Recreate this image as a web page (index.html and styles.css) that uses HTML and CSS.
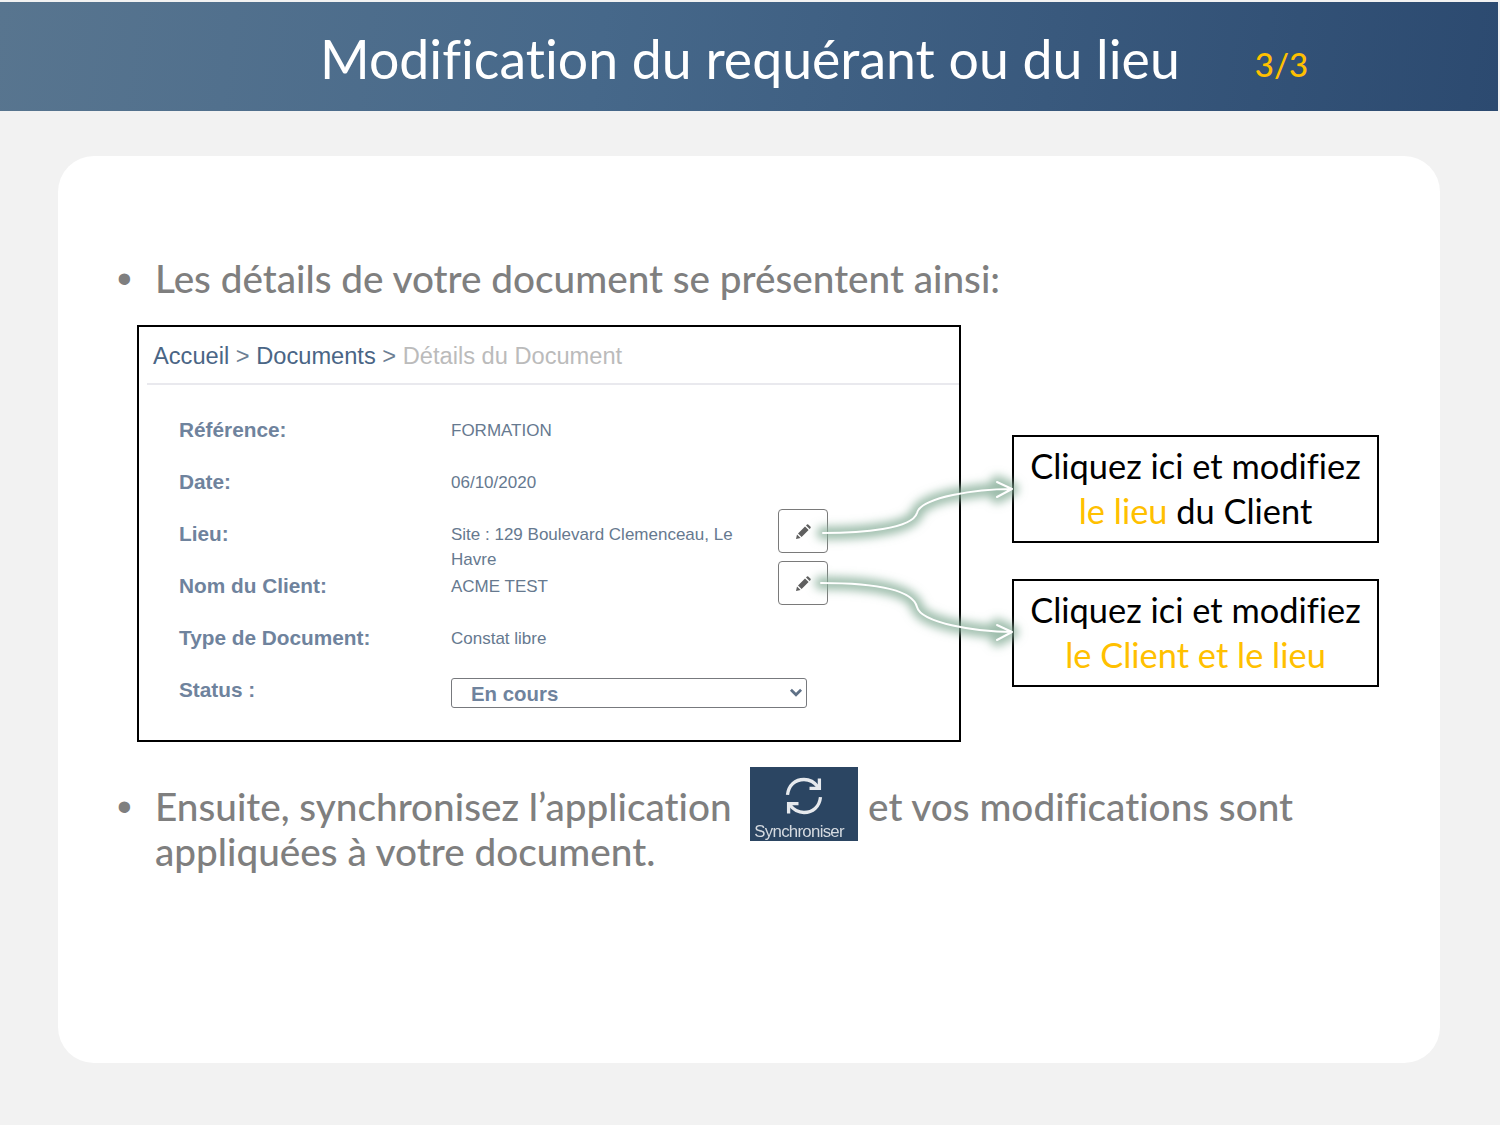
FILE: index.html
```html
<!DOCTYPE html>
<html lang="fr">
<head>
<meta charset="utf-8">
<title>Modification du requérant ou du lieu</title>
<link rel="stylesheet" href="styles.css">
</head>
<body>
<header class="banner">
  <h1 class="banner-title">Modification du requérant ou du lieu</h1>
  <span class="banner-page">3/3</span>
</header>
<main class="card">
  <div class="bullet bullet-first"><span class="dot">•</span><p class="bullet-text">Les détails de votre document se présentent ainsi:</p></div>
  <section class="demo">
    <div class="shot">
      <nav class="crumbs"><span class="crumb-link">Accueil</span> <span class="crumb-sep">&gt;</span> <span class="crumb-link">Documents</span> <span class="crumb-sep">&gt;</span> <span class="crumb-current">Détails du Document</span></nav>
      <dl class="details">
        <dt class="label">Référence:</dt><dd class="value">FORMATION</dd><dd class="action"></dd>
        <dt class="label">Date:</dt><dd class="value">06/10/2020</dd><dd class="action"></dd>
        <dt class="label">Lieu:</dt><dd class="value">Site : 129 Boulevard Clemenceau, Le Havre</dd>
        <dd class="action"><button class="edit" type="button" aria-label="Modifier le lieu"><svg class="pencil" viewBox="0 0 16 16"><path d="M1 15l1-4.600L5.600 14zM3 9.400L10 2.400l3.600 3.600-7 7zM11 1.400l1-1q.6-.4 1.200 0l2.400 2.400q.4.600 0 1.200l-1 1z"/></svg></button></dd>
        <dt class="label">Nom du Client:</dt><dd class="value">ACME TEST</dd>
        <dd class="action"><button class="edit" type="button" aria-label="Modifier le client"><svg class="pencil" viewBox="0 0 16 16"><path d="M1 15l1-4.600L5.600 14zM3 9.400L10 2.400l3.600 3.600-7 7zM11 1.400l1-1q.6-.4 1.200 0l2.400 2.400q.4.600 0 1.200l-1 1z"/></svg></button></dd>
        <dt class="label">Type de Document:</dt><dd class="value">Constat libre</dd><dd class="action"></dd>
        <dt class="label">Status :</dt>
        <dd class="value value-select"><span class="select-wrap"><select class="status"><option>En cours</option></select><svg class="chevron" viewBox="0 0 12 8"><path d="M1.500 1.500L6 6l4.500-4.500"/></svg></span></dd><dd class="action"></dd>
      </dl>
    </div>
    <div class="callouts">
      <div class="callout">Cliquez ici et modifiez<br><span class="hot">le lieu</span> du Client</div>
      <div class="callout">Cliquez ici et modifiez<br><span class="hot">le Client et le lieu</span></div>
    </div>
    <svg class="arrows" viewBox="0 0 1242 417" aria-hidden="true">
      <defs><filter id="glow" x="-20%" y="-60%" width="140%" height="220%"><feGaussianBlur stdDeviation="5"/></filter></defs>
      <g class="arrow-glow" filter="url(#glow)">
        <path d="M686 208C725 208 775 204 780 188C784 172 840 164 875 164M860 157L875 164L860 172"/>
        <path d="M684 258C725 258 775 262 780 282C784 298 840 307 875 307M860 300L875 307L860 315"/>
      </g>
      <g class="arrow-line">
        <path d="M686 208C725 208 775 204 780 188C784 172 840 164 875 164M860 157L875 164L860 172"/>
        <path d="M684 258C725 258 775 262 780 282C784 298 840 307 875 307M860 300L875 307L860 315"/>
      </g>
    </svg>
  </section>
  <div class="bullet bullet-second"><span class="dot">•</span><p class="bullet-text">Ensuite, synchronisez l’application <span class="sync"><svg class="sync-icon" viewBox="0 0 40 40"><path d="M5 19C6 10 12 5 20 5C26 5 30 8 33 12M35 21C34 30 28 35 20 35C14 35 10 32 7 28"/><path d="M34 4V13H25M6 36V27H15"/></svg><span class="sync-label">Synchroniser</span></span> et vos modifications sont appliquées à votre document.</p></div>
</main>
</body>
</html>
```
FILE: styles.css
```css
* { box-sizing: border-box; }
html, body { margin: 0; padding: 0; }
body {
  width: 1500px;
  height: 1125px;
  overflow: hidden;
  background: #f2f2f2;
  font-family: "Lato", "Liberation Sans", sans-serif;
  font-variant-ligatures: none;
}
.banner {
  display: flex;
  align-items: flex-start;
  height: 109px;
  margin: 2px 2px 0 0;
  padding: 21px 0 0 320px;
  background: linear-gradient(98deg, #58758f 0%, #46688a 40%, #2c4a70 100%);
}
.banner-title {
  margin: 0;
  font-size: 53.600px;
  line-height: 70px;
  font-weight: 400;
  color: #fff;
  white-space: nowrap;
}
.banner-page {
  margin: 21px 0 0 75px;
  font-size: 33px;
  line-height: 40px;
  font-weight: 500;
  color: #ffc000;
}
.card {
  width: 1382px;
  height: 907px;
  margin: 45px 0 0 58px;
  padding: 100px 0 0 59px;
  background: #fff;
  border-radius: 36px;
}
.bullet {
  display: flex;
  color: #7f7f7f;
  font-size: 38.700px;
  font-weight: 500;
  line-height: 45px;
}
.dot {
  width: 38px;
  flex: none;
  font-family: "Liberation Sans", Arial, sans-serif;
  font-size: 42px;
}
.bullet-text { margin: 0; width: 1180px; }
.demo {
  position: relative;
  display: flex;
  gap: 51px;
  margin: 24px 0 0 20px;
  width: 1242px;
}
.shot {
  width: 824px;
  height: 417px;
  padding: 0 0 0 8px;
  border: 2px solid #000;
  background: #fff;
  font-family: "Liberation Sans", Arial, sans-serif;
}
.crumbs {
  height: 58px;
  padding: 0 0 0 6px;
  border-bottom: 2px solid #e9e9ee;
  font-size: 23.650px;
  line-height: 58px;
  white-space: nowrap;
}
.crumb-link { color: #4a6585; }
.crumb-sep { color: #6d7f94; }
.crumb-current { color: #bbb; }
.details {
  display: grid;
  grid-template-columns: 272px 327px 50px;
  grid-auto-rows: 52px;
  margin: 19px 0 0 32px;
}
.label {
  font-size: 20.800px;
  line-height: 52px;
  font-weight: 700;
  color: #6f839d;
  white-space: nowrap;
}
.value {
  margin: 0;
  width: 300px;
  font-size: 17px;
  line-height: 25px;
  padding-top: 14px;
  color: #66798f;
}
.action { margin: 0; padding-top: 1px; }
.edit {
  display: flex;
  align-items: center;
  justify-content: center;
  width: 50px;
  height: 44px;
  padding: 1px 1px 0 0;
  border: 1px solid #7a7a7a;
  border-radius: 4px;
  background: #fff;
}
.pencil { width: 16px; height: 16px; fill: #5f5f5f; }
.value-select { width: 356px; padding-top: 14px; }
.select-wrap { position: relative; display: block; width: 356px; height: 30px; }
.status {
  display: block;
  width: 356px;
  height: 30px;
  padding: 1px 0 0 19px;
  border: 1px solid #77797d;
  border-radius: 3px;
  appearance: none;
  background: #fff;
  font: 700 20.400px "Liberation Sans", Arial, sans-serif;
  color: #6f839d;
}
.chevron {
  position: absolute;
  right: 4px;
  top: 10px;
  width: 14px;
  height: 9px;
  fill: none;
  stroke: #5f7187;
  stroke-width: 2.400;
}
.callouts {
  display: flex;
  flex-direction: column;
  gap: 36px;
  margin-top: 110px;
}
.callout {
  width: 367px;
  height: 108px;
  border: 2px solid #000;
  background: #fff;
  color: #000;
  font-size: 34.400px;
  line-height: 45px;
  text-align: center;
  padding-top: 6px;
  white-space: nowrap;
}
.hot { color: #ffc000; }
.arrows {
  position: absolute;
  left: 0;
  top: 0;
  width: 1242px;
  height: 417px;
  pointer-events: none;
}
.arrows path { fill: none; stroke-linecap: round; stroke-linejoin: round; }
.arrow-glow path { stroke: #86ad97; stroke-width: 13; opacity: .8; }
.arrow-line path { stroke: #fff; stroke-width: 2; }
.bullet-second { margin-top: 42px; }
.sync {
  display: inline-block;
  position: relative;
  width: 108px;
  height: 74px;
  margin: -30px 0 -13px 9px;
  vertical-align: -7px;
  overflow: hidden;
  background: #2b4562;
}
.sync-icon {
  position: absolute;
  left: 32px;
  top: 7px;
  width: 44px;
  height: 44px;
  fill: none;
  stroke: #e6e9ed;
  stroke-width: 3;
}
.sync-label {
  position: absolute;
  left: 4px;
  bottom: -1px;
  font: 400 16.800px/20px "Liberation Sans", Arial, sans-serif;
  letter-spacing: -.7px;
  color: #d5dae0;
  filter: blur(.4px);
}
```
